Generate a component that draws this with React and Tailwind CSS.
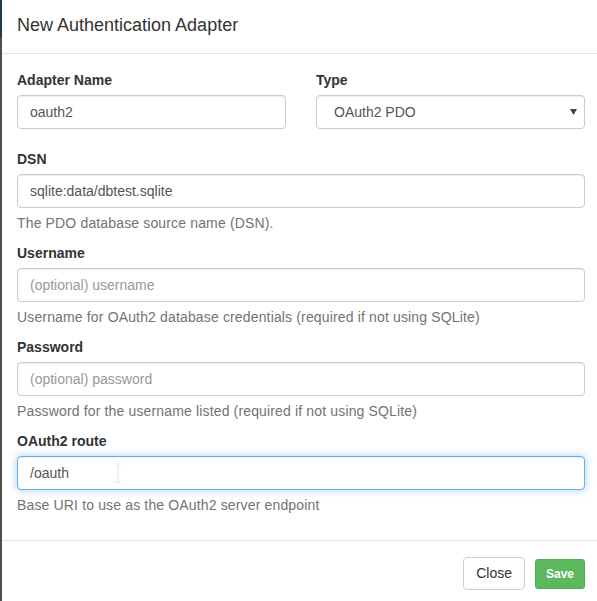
import React from "react";

const font = { fontFamily: '"Liberation Sans", Arial, Helvetica, sans-serif' };

function Label({ children }) {
  return <label className="block h-[20px] leading-[20px] text-[14px] font-bold text-[#333] mb-[5px]">{children}</label>;
}

function Input({ value, placeholder, focused }) {
  return (
    <div
      className={
        "relative h-[34px] rounded-[4px] border bg-white px-[12px] flex items-center text-[14px] " +
        (focused
          ? "border-[#66afe9] shadow-[inset_0_1px_1px_rgba(0,0,0,0.075),0_0_8px_rgba(102,175,233,0.6)]"
          : "border-[#ccc] shadow-[inset_0_1px_1px_rgba(0,0,0,0.075)]")
      }
    >
      {value ? <span className="text-[#555]">{value}</span> : <span className="text-[#999]">{placeholder}</span>}
      {focused && (
        <svg className="absolute left-[96px] top-[6px]" width="8" height="20" viewBox="0 0 8 20">
          <path d="M1 1h6M4 1v18M1 19h6" stroke="#e6e6e6" strokeWidth="1.2" fill="none" />
        </svg>
      )}
    </div>
  );
}

function Help({ children }) {
  return <p className="mt-[5px] mb-[10px] h-[20px] leading-[20px] text-[14px] tracking-[0.15px] text-[#737373]">{children}</p>;
}

export default function App() {
  return (
    <div className="w-[597px] h-[601px] overflow-hidden flex bg-white" style={font}>
      <div className="w-[2px] shrink-0 flex flex-col">
        <div className="h-[37px] bg-[#1d3a52]" />
        <div className="flex-1 bg-[#4e4e4e]" />
      </div>
      <div className="w-[598px] shrink-0 flex flex-col">
        <div className="pt-[13px] pb-[15px] px-[15px] border-b border-[#e5e5e5]">
          <h4 className="h-[25px] leading-[25px] text-[18px] text-[#333]">New Authentication Adapter</h4>
        </div>
        <div className="pt-[16px] px-[15px] pb-[15px]">
          <div className="grid grid-cols-2 gap-x-[30px] mb-[20px]">
            <div>
              <Label>Adapter Name</Label>
              <Input value="oauth2" />
            </div>
            <div>
              <Label>Type</Label>
              <div className="relative h-[34px] rounded-[4px] border border-[#ccc] bg-white pl-[17px] pr-[12px] flex items-center text-[14px] text-[#555] shadow-[inset_0_1px_1px_rgba(0,0,0,0.075)]">
                OAuth2 PDO
                <svg className="absolute right-[7px] top-[13px]" width="7" height="6" viewBox="0 0 7 6">
                  <path d="M0 0h7L3.5 6z" fill="#444" />
                </svg>
              </div>
            </div>
          </div>
          <div>
            <Label>DSN</Label>
            <Input value="sqlite:data/dbtest.sqlite" />
            <Help>The PDO database source name (DSN).</Help>
          </div>
          <div>
            <Label>Username</Label>
            <Input placeholder="(optional) username" />
            <Help>Username for OAuth2 database credentials (required if not using SQLite)</Help>
          </div>
          <div>
            <Label>Password</Label>
            <Input placeholder="(optional) password" />
            <Help>Password for the username listed (required if not using SQLite)</Help>
          </div>
          <div>
            <Label>OAuth2 route</Label>
            <Input value="/oauth" focused />
            <Help>Base URI to use as the OAuth2 server endpoint</Help>
          </div>
        </div>
        <div className="border-t border-[#e5e5e5] pt-[16px] px-[15px] flex justify-end items-center gap-[10px]">
          <button className="h-[33px] px-[12px] rounded-[4px] border border-[#ccc] bg-white text-[14px] text-[#333]">Close</button>
          <button className="h-[30px] px-[10px] rounded-[3px] border border-[#4cae4c] bg-[#5cb85c] text-[12px] font-bold text-white">Save</button>
        </div>
      </div>
    </div>
  );
}
